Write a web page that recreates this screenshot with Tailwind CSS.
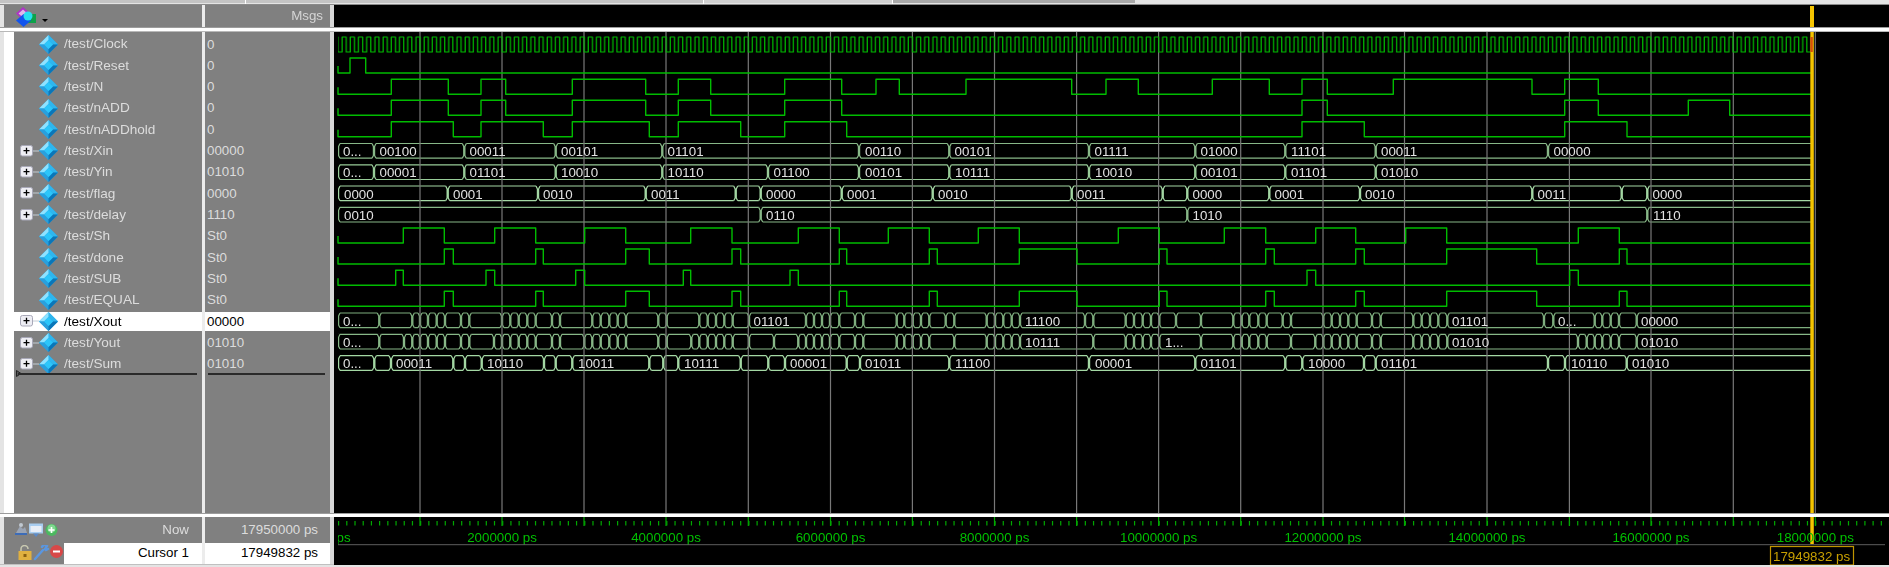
<!DOCTYPE html>
<html>
<head>
<meta charset="utf-8">
<script src="https://cdn.jsdelivr.net/npm/@tailwindcss/browser@4"></script>
</head>
<body class="w-[1889px] h-[567px] overflow-hidden bg-[#e4e4e4] font-['Liberation_Sans'] text-[13.33px] leading-none text-[#dcdcdc] blur-[0.35px]">
<svg class="absolute w-0 h-0">
  <defs>
    <g id="dia">
      <polygon points="9.5,0 19,9.5 9.5,19 0,9.5" fill="#1ea6e6"/>
      <polygon points="9.5,0 19,9.5 14,9.5 9.5,5" fill="#2fb6ee"/>
      <polygon points="9.5,0 9.5,5 5,9.5 0,9.5" fill="#8fe2ff"/>
      <polygon points="0,9.5 5,9.5 9.5,14 9.5,19" fill="#2a9fdc"/>
      <polygon points="19,9.5 14,9.5 9.5,14 9.5,19" fill="#0b76b8"/>
      <polygon points="9.5,5 14,9.5 9.5,14 5,9.5" fill="#2cc6fa"/>
    </g>
    <g id="plus">
      <path d="M13 6H19" stroke="#c4ccd4" stroke-width="1"/>
      <rect x="0.5" y="0.5" width="12" height="10.5" rx="2" fill="#eeeef4" stroke="#a8a8b8"/>
      <path d="M3.5 5.7H9.5M6.5 2.8V8.7" stroke="#000" stroke-width="1.3"/>
    </g>
    <g id="n">
      <rect x="-2" y="-1" width="4" height="17" fill="#000" stroke="none"/>
      <path d="M-2 0L-0.6 3V12L-2 14.7M2 0L0.6 3V12L2 14.7" fill="none"/>
    </g>
    <g id="s">
      <rect x="-2" y="-1" width="4" height="17" fill="#000" stroke="none"/>
      <path d="M2 0L0.6 3V12L2 14.7" fill="none"/>
    </g>
    <pattern id="clk" patternUnits="userSpaceOnUse" x="340.05" y="35" width="8.206" height="19">
      <path d="M0 17H2.05V2H6.15V17H8.206" fill="none" stroke="#00bc00" stroke-width="1.2" stroke-linejoin="round"/>
    </pattern>
  </defs>
</svg>

<!-- top strip -->
<div class="flex h-[5px] border-b border-[#8a8a8a]">
  <div class="w-[245px] h-[3px] bg-[#c4c4c4]"></div>
  <div class="w-[1px] h-[4px] bg-white"></div>
  <div class="w-[457px] h-[3px] bg-[#c4c4c4]"></div>
  <div class="w-[1px] h-[4px] bg-white"></div>
  <div class="w-[188px] h-[3px] bg-[#d0d0d0]"></div>
  <div class="w-[1px] h-[4px] bg-white"></div>
  <div class="w-[242px] h-[3px] bg-[#a8a8a8]"></div>
</div>

<!-- header -->
<div class="flex h-[22px] pl-[4px]">
  <div class="relative w-[198px] bg-[#808080]">
    <svg class="absolute left-[11px] top-[1px] w-[38px] h-[22px]" viewBox="15 6 38 22">
      <polygon points="23,7 30,13.500 23,20 16,13.500" fill="#b030c8"/>
      <polygon points="23,9.500 27.500,13.500 23,17.500 18.500,13.500" fill="#e0b8e8"/>
      <rect x="26" y="14" width="10" height="9" fill="#0ea24a"/>
      <polygon points="23.500,14 31,20.500 23.500,27 16,20.500" fill="#1254ee"/>
      <circle cx="28" cy="16" r="4.500" fill="#27e0f0"/>
      <polygon points="42,19 48,19 45,22" fill="#000"/>
    </svg>
  </div>
  <div class="w-[3px] bg-[#ececec]"></div>
  <div class="w-[125px] bg-[#808080] flex items-center justify-end pr-[7px] text-[#d4d4d4]">Msgs</div>
  <div class="w-[4px] bg-[#d8d8d8]"></div>
  <div class="relative flex-1 bg-black">
    <div class="absolute left-[1476px] top-[1px] bottom-0 w-[3.5px] bg-[#f5c400]"></div>
  </div>
</div>
<div class="h-[5px] border-t border-b border-t-[#9c9c9c] border-b-[#b8b8b8] bg-white"></div>

<!-- list -->
<div class="flex h-[481px] pl-[4px]">
  <div class="relative w-[198px] flex bg-[#808080]">
    <div class="w-[10px] bg-white"></div>
    <div class="flex-1 flex flex-col pt-[1.5px] text-[13.6px]">
      <div class="flex items-center h-[21.33px] pl-[25px]"><svg class="w-[19px] h-[19px]"><use href="#dia"/></svg><span class="ml-[6px]">/test/Clock</span></div>
      <div class="flex items-center h-[21.33px] pl-[25px]"><svg class="w-[19px] h-[19px]"><use href="#dia"/></svg><span class="ml-[6px]">/test/Reset</span></div>
      <div class="flex items-center h-[21.33px] pl-[25px]"><svg class="w-[19px] h-[19px]"><use href="#dia"/></svg><span class="ml-[6px]">/test/N</span></div>
      <div class="flex items-center h-[21.33px] pl-[25px]"><svg class="w-[19px] h-[19px]"><use href="#dia"/></svg><span class="ml-[6px]">/test/nADD</span></div>
      <div class="flex items-center h-[21.33px] pl-[25px]"><svg class="w-[19px] h-[19px]"><use href="#dia"/></svg><span class="ml-[6px]">/test/nADDhold</span></div>
      <div class="flex items-center h-[21.33px] pl-[6px]"><svg class="w-[19px] h-[12px]"><use href="#plus"/></svg><svg class="w-[19px] h-[19px]"><use href="#dia"/></svg><span class="ml-[6px]">/test/Xin</span></div>
      <div class="flex items-center h-[21.33px] pl-[6px]"><svg class="w-[19px] h-[12px]"><use href="#plus"/></svg><svg class="w-[19px] h-[19px]"><use href="#dia"/></svg><span class="ml-[6px]">/test/Yin</span></div>
      <div class="flex items-center h-[21.33px] pl-[6px]"><svg class="w-[19px] h-[12px]"><use href="#plus"/></svg><svg class="w-[19px] h-[19px]"><use href="#dia"/></svg><span class="ml-[6px]">/test/flag</span></div>
      <div class="flex items-center h-[21.33px] pl-[6px]"><svg class="w-[19px] h-[12px]"><use href="#plus"/></svg><svg class="w-[19px] h-[19px]"><use href="#dia"/></svg><span class="ml-[6px]">/test/delay</span></div>
      <div class="flex items-center h-[21.33px] pl-[25px]"><svg class="w-[19px] h-[19px]"><use href="#dia"/></svg><span class="ml-[6px]">/test/Sh</span></div>
      <div class="flex items-center h-[21.33px] pl-[25px]"><svg class="w-[19px] h-[19px]"><use href="#dia"/></svg><span class="ml-[6px]">/test/done</span></div>
      <div class="flex items-center h-[21.33px] pl-[25px]"><svg class="w-[19px] h-[19px]"><use href="#dia"/></svg><span class="ml-[6px]">/test/SUB</span></div>
      <div class="flex items-center h-[21.33px] pl-[25px]"><svg class="w-[19px] h-[19px]"><use href="#dia"/></svg><span class="ml-[6px]">/test/EQUAL</span></div>
      <div class="flex items-center h-[19.33px] my-[1px] pl-[6px] bg-white text-black"><svg class="w-[19px] h-[12px]"><use href="#plus"/></svg><svg class="w-[19px] h-[19px]"><use href="#dia"/></svg><span class="ml-[6px]">/test/Xout</span></div>
      <div class="flex items-center h-[21.33px] pl-[6px]"><svg class="w-[19px] h-[12px]"><use href="#plus"/></svg><svg class="w-[19px] h-[19px]"><use href="#dia"/></svg><span class="ml-[6px]">/test/Yout</span></div>
      <div class="flex items-center h-[21.33px] pl-[6px]"><svg class="w-[19px] h-[12px]"><use href="#plus"/></svg><svg class="w-[19px] h-[19px]"><use href="#dia"/></svg><span class="ml-[6px]">/test/Sum</span></div>
    </div>
    <svg class="absolute left-[12px] top-[338px] w-[8px] h-[8px]"><path d="M0.500 0.500L5 3.500L0.500 6.500Z" fill="#555" stroke="#222"/></svg>
    <div class="absolute left-[14px] top-[341px] w-[179px] h-[2px] bg-[#2a2a2a]"></div>
  </div>
  <div class="w-[3px] bg-[#ececec]"></div>
  <div class="relative w-[125px] flex flex-col pt-[1.5px] pl-[2px] bg-[#808080]">
    <div class="flex items-center h-[21.33px]">0</div>
    <div class="flex items-center h-[21.33px]">0</div>
    <div class="flex items-center h-[21.33px]">0</div>
    <div class="flex items-center h-[21.33px]">0</div>
    <div class="flex items-center h-[21.33px]">0</div>
    <div class="flex items-center h-[21.33px]">00000</div>
    <div class="flex items-center h-[21.33px]">01010</div>
    <div class="flex items-center h-[21.33px]">0000</div>
    <div class="flex items-center h-[21.33px]">1110</div>
    <div class="flex items-center h-[21.33px]">St0</div>
    <div class="flex items-center h-[21.33px]">St0</div>
    <div class="flex items-center h-[21.33px]">St0</div>
    <div class="flex items-center h-[21.33px]">St0</div>
    <div class="flex items-center h-[19.33px] my-[1px] -ml-[2px] pl-[2px] bg-white text-black">00000</div>
    <div class="flex items-center h-[21.33px]">01010</div>
    <div class="flex items-center h-[21.33px]">01010</div>
    <div class="absolute left-[3px] top-[341px] w-[117px] h-[2px] bg-[#2a2a2a]"></div>
  </div>
  <div class="w-[4px] bg-[#d8d8d8]"></div>
  <svg class="w-[1555px] h-[481px] bg-black" viewBox="334 32 1555 481">
    <!-- bus outlines -->
    <g fill="none" stroke="#88b888" stroke-width="1.2">
      <g transform="translate(0,143.500)"><path d="M338 0H1811M338 14.700H1811"/><use href="#s" x="338"/><use href="#n" x="374"/><use href="#n" x="464.300"/><use href="#n" x="555.700"/><use href="#n" x="662.300"/><use href="#n" x="859"/><use href="#n" x="949.300"/><use href="#n" x="1089"/><use href="#n" x="1195.300"/><use href="#n" x="1285.300"/><use href="#n" x="1375.700"/><use href="#n" x="1548"/></g>
      <g transform="translate(0,164.800)" stroke="#98cc98"><path d="M338 0H1811M338 14.700H1811"/><use href="#s" x="338"/><use href="#n" x="374"/><use href="#n" x="464.300"/><use href="#n" x="555.700"/><use href="#n" x="662.300"/><use href="#n" x="768"/><use href="#n" x="859"/><use href="#n" x="949.300"/><use href="#n" x="1089"/><use href="#n" x="1195.300"/><use href="#n" x="1285.300"/><use href="#n" x="1375.700"/></g>
      <g transform="translate(0,186)" stroke="#a4d8a4"><path d="M338 0H1811M338 14.700H1811"/><use href="#s" x="338"/><use href="#n" x="447.700"/><use href="#n" x="538"/><use href="#n" x="645.700"/><use href="#n" x="735.700"/><use href="#n" x="760.700"/><use href="#n" x="841.700"/><use href="#n" x="932.700"/><use href="#n" x="1071.700"/><use href="#n" x="1162.700"/><use href="#n" x="1187.300"/><use href="#n" x="1269.300"/><use href="#n" x="1360"/><use href="#n" x="1532.300"/><use href="#n" x="1621.700"/><use href="#n" x="1647.300"/></g>
      <g transform="translate(0,207.300)"><path d="M338 0H1811M338 14.700H1811"/><use href="#s" x="338"/><use href="#n" x="760.700"/><use href="#n" x="1187.300"/><use href="#n" x="1647.300"/></g>
      <g transform="translate(0,313)" stroke="#7eae7e"><path d="M338 0H1811M338 14.700H1811"/><use href="#s" x="338"/><use href="#n" x="379.300"/><use href="#n" x="412.300"/><use href="#n" x="420"/><use href="#n" x="428"/><use href="#n" x="436.700"/><use href="#n" x="445"/><use href="#n" x="461"/><use href="#n" x="469.300"/><use href="#n" x="502"/><use href="#n" x="510.300"/><use href="#n" x="518.700"/><use href="#n" x="527.300"/><use href="#n" x="535.700"/><use href="#n" x="552"/><use href="#n" x="560"/><use href="#n" x="592.300"/><use href="#n" x="600.700"/><use href="#n" x="609.300"/><use href="#n" x="617.700"/><use href="#n" x="626"/><use href="#n" x="658.300"/><use href="#n" x="666.700"/><use href="#n" x="699.300"/><use href="#n" x="707.700"/><use href="#n" x="716"/><use href="#n" x="724.300"/><use href="#n" x="732.700"/><use href="#n" x="749"/><use href="#n" x="806"/><use href="#n" x="814"/><use href="#n" x="822"/><use href="#n" x="830"/><use href="#n" x="839.300"/><use href="#n" x="855"/><use href="#n" x="863.300"/><use href="#n" x="896.700"/><use href="#n" x="904.300"/><use href="#n" x="912.700"/><use href="#n" x="921"/><use href="#n" x="929.300"/><use href="#n" x="945.700"/><use href="#n" x="954.300"/><use href="#n" x="986.700"/><use href="#n" x="995"/><use href="#n" x="1003.300"/><use href="#n" x="1011.700"/><use href="#n" x="1020"/><use href="#n" x="1085"/><use href="#n" x="1093.300"/><use href="#n" x="1125.700"/><use href="#n" x="1134"/><use href="#n" x="1142.700"/><use href="#n" x="1151"/><use href="#n" x="1159.300"/><use href="#n" x="1176"/><use href="#n" x="1201"/><use href="#n" x="1233.300"/><use href="#n" x="1241.700"/><use href="#n" x="1249.300"/><use href="#n" x="1258.300"/><use href="#n" x="1266.700"/><use href="#n" x="1282.700"/><use href="#n" x="1291"/><use href="#n" x="1323.300"/><use href="#n" x="1331.700"/><use href="#n" x="1340"/><use href="#n" x="1348.300"/><use href="#n" x="1356.700"/><use href="#n" x="1372"/><use href="#n" x="1380.700"/><use href="#n" x="1413.300"/><use href="#n" x="1421.700"/><use href="#n" x="1430"/><use href="#n" x="1438.300"/><use href="#n" x="1447.300"/><use href="#n" x="1544"/><use href="#n" x="1553.300"/><use href="#n" x="1594.700"/><use href="#n" x="1602.300"/><use href="#n" x="1610.700"/><use href="#n" x="1619"/><use href="#n" x="1636.700"/></g>
      <g transform="translate(0,334.300)"><path d="M338 0H1811M338 14.700H1811"/><use href="#s" x="338"/><use href="#n" x="379.300"/><use href="#n" x="404"/><use href="#n" x="412.300"/><use href="#n" x="420"/><use href="#n" x="428"/><use href="#n" x="436.700"/><use href="#n" x="445"/><use href="#n" x="461"/><use href="#n" x="469.300"/><use href="#n" x="494"/><use href="#n" x="502"/><use href="#n" x="510.300"/><use href="#n" x="518.700"/><use href="#n" x="527.300"/><use href="#n" x="535.700"/><use href="#n" x="552"/><use href="#n" x="560"/><use href="#n" x="584.300"/><use href="#n" x="592.300"/><use href="#n" x="600.700"/><use href="#n" x="609.300"/><use href="#n" x="617.700"/><use href="#n" x="626"/><use href="#n" x="658.300"/><use href="#n" x="666.700"/><use href="#n" x="691.300"/><use href="#n" x="699.300"/><use href="#n" x="707.700"/><use href="#n" x="716"/><use href="#n" x="724.300"/><use href="#n" x="732.700"/><use href="#n" x="749"/><use href="#n" x="774"/><use href="#n" x="798.300"/><use href="#n" x="806"/><use href="#n" x="814"/><use href="#n" x="822"/><use href="#n" x="830"/><use href="#n" x="839.300"/><use href="#n" x="855"/><use href="#n" x="863.300"/><use href="#n" x="896.700"/><use href="#n" x="904.300"/><use href="#n" x="912.700"/><use href="#n" x="921"/><use href="#n" x="929.300"/><use href="#n" x="954.300"/><use href="#n" x="986.700"/><use href="#n" x="995"/><use href="#n" x="1003.300"/><use href="#n" x="1011.700"/><use href="#n" x="1020"/><use href="#n" x="1093.300"/><use href="#n" x="1125.700"/><use href="#n" x="1134"/><use href="#n" x="1142.700"/><use href="#n" x="1151"/><use href="#n" x="1159.300"/><use href="#n" x="1201"/><use href="#n" x="1233.300"/><use href="#n" x="1241.700"/><use href="#n" x="1249.300"/><use href="#n" x="1258.300"/><use href="#n" x="1266.700"/><use href="#n" x="1291"/><use href="#n" x="1315.300"/><use href="#n" x="1323.300"/><use href="#n" x="1331.700"/><use href="#n" x="1340"/><use href="#n" x="1348.300"/><use href="#n" x="1356.700"/><use href="#n" x="1372"/><use href="#n" x="1380.700"/><use href="#n" x="1413.300"/><use href="#n" x="1421.700"/><use href="#n" x="1430"/><use href="#n" x="1438.300"/><use href="#n" x="1447.300"/><use href="#n" x="1578"/><use href="#n" x="1586.700"/><use href="#n" x="1594.700"/><use href="#n" x="1602.300"/><use href="#n" x="1610.700"/><use href="#n" x="1619"/><use href="#n" x="1636.700"/></g>
      <g transform="translate(0,355.700)" stroke="#a4d8a4"><path d="M338 0H1811M338 14.700H1811"/><use href="#s" x="338"/><use href="#n" x="374.300"/><use href="#n" x="391"/><use href="#n" x="453.300"/><use href="#n" x="465"/><use href="#n" x="481.700"/><use href="#n" x="544"/><use href="#n" x="555.700"/><use href="#n" x="572.300"/><use href="#n" x="649.300"/><use href="#n" x="663.300"/><use href="#n" x="678.300"/><use href="#n" x="740.700"/><use href="#n" x="768.300"/><use href="#n" x="785"/><use href="#n" x="846.700"/><use href="#n" x="860"/><use href="#n" x="949.300"/><use href="#n" x="1089"/><use href="#n" x="1195.300"/><use href="#n" x="1285.300"/><use href="#n" x="1302.300"/><use href="#n" x="1364"/><use href="#n" x="1375.700"/><use href="#n" x="1548"/><use href="#n" x="1565"/><use href="#n" x="1626.700"/></g>
    </g>
    <!-- grid -->
    <path d="M420 32V513M502 32V513M584 32V513M666 32V513M748.300 32V513M830.500 32V513M912.400 32V513M994.500 32V513M1076.600 32V513M1158.600 32V513M1240.700 32V513M1323 32V513M1404.500 32V513M1487 32V513M1569.400 32V513M1651 32V513M1733.300 32V513M1815.300 32V513" stroke="#787878" stroke-width="1.2" fill="none"/>
    <!-- scalar signals -->
    <rect x="338" y="35" width="1473" height="19" fill="url(#clk)"/>
    <g fill="none" stroke="#00bc00" stroke-width="1.4" stroke-linejoin="round">
      <path transform="translate(0,58)" d="M338 8V15H350V0H365.700V15H1811"/>
      <path transform="translate(0,79.300)" d="M338 8V15H391.300V0H448.300V15H481V0H505.700V15H572.300V0H645.700V15H678.300V0H710.700V15H784.700V0H841.700V15H876V0H899.300V15H966V0H1071.700V15H1106V0H1138.300V15H1212.300V0H1269.300V15H1302V0H1327.300V15H1393.300V0H1532V15H1564.700V0H1598.300V15H1811"/>
      <path transform="translate(0,100.300)" d="M338 8V15H391.300V0H448.300V15H481V0H505.700V15H572.300V0H645.700V15H678.300V0H710.700V15H784.700V0H841.700V15H1302V0H1327.300V15H1564.700V0H1598.300V15H1688.300V0H1729.700V15H1811"/>
      <path transform="translate(0,121.700)" d="M338 8V15H391.300V0H453.300V15H481V0H543.300V15H572.300V0H649.300V15H678.300V0H740.700V15H784.700V0H846.700V15H1302V0H1364.300V15H1564.700V0H1627V15H1811"/>
      <path transform="translate(0,228)" d="M338 8V15H403.300V0H444.300V15H494.700V0H535.700V15H584.700V0H625.700V15H690.700V0H732V15H798.300V0H839.300V15H888.300V0H929.300V15H978.300V0H1019.300V15H1118.300V0H1159.300V15H1224.300V0H1265.700V15H1315.700V0H1355.700V15H1405.700V0H1446.700V15H1578.300V0H1619.300V15H1811"/>
      <path transform="translate(0,249)" d="M338 8V15H444.300V0H453.300V15H535.700V0H543.300V15H625.700V0H649.300V15H732V0H740.700V15H839.300V0H846.700V15H929.300V0H937.300V15H1019.300V0H1077V15H1159.300V0H1167V15H1265.700V0H1274.300V15H1355.700V0H1364.300V15H1446.700V0H1536.700V15H1619.300V0H1627V15H1811"/>
      <path transform="translate(0,270.300)" d="M338 8V15H395.700V0H403.300V15H486V0H494.700V15H575.700V0H584.700V15H683.300V0H690.700V15H790V0H798.300V15H1307V0H1315.700V15H1569.700V0H1578.300V15H1811"/>
      <path transform="translate(0,291.300)" d="M338 8V15H444.300V0H453.300V15H535.700V0H543.300V15H625.700V0H649.300V15H732V0H740.700V15H839.300V0H846.700V15H929.300V0H937.300V15H1019.300V0H1077V15H1159.300V0H1167V15H1265.700V0H1274.300V15H1355.700V0H1364.300V15H1446.700V0H1536.700V15H1619.300V0H1627V15H1811"/>
    </g>
    <!-- bus values -->
    <g fill="#e2e2e2" font-size="13.33">
      <text y="156"><tspan x="343">0...</tspan><tspan x="379.500">00100</tspan><tspan x="469.500">00011</tspan><tspan x="561">00101</tspan><tspan x="667.500">01101</tspan><tspan x="865">00110</tspan><tspan x="954.500">00101</tspan><tspan x="1094.500">01111</tspan><tspan x="1200.500">01000</tspan><tspan x="1291">11101</tspan><tspan x="1381">00011</tspan><tspan x="1553.500">00000</tspan></text>
      <text y="177.300"><tspan x="343">0...</tspan><tspan x="379.500">00001</tspan><tspan x="469.500">01101</tspan><tspan x="561">10010</tspan><tspan x="667.500">10110</tspan><tspan x="773.500">01100</tspan><tspan x="865">00101</tspan><tspan x="955">10111</tspan><tspan x="1095">10010</tspan><tspan x="1200.500">00101</tspan><tspan x="1291">01101</tspan><tspan x="1381">01010</tspan></text>
      <text y="198.500"><tspan x="344">0000</tspan><tspan x="453">0001</tspan><tspan x="543">0010</tspan><tspan x="651">0011</tspan><tspan x="766">0000</tspan><tspan x="847">0001</tspan><tspan x="938">0010</tspan><tspan x="1077">0011</tspan><tspan x="1192.500">0000</tspan><tspan x="1274.500">0001</tspan><tspan x="1365">0010</tspan><tspan x="1537.500">0011</tspan><tspan x="1652.500">0000</tspan></text>
      <text y="220"><tspan x="344">0010</tspan><tspan x="766">0110</tspan><tspan x="1192.500">1010</tspan><tspan x="1653">1110</tspan></text>
      <text y="325.500"><tspan x="343">0...</tspan><tspan x="753.500">01101</tspan><tspan x="1025">11100</tspan><tspan x="1452">01101</tspan><tspan x="1558">0...</tspan><tspan x="1641">00000</tspan></text>
      <text y="346.800"><tspan x="343">0...</tspan><tspan x="1025">10111</tspan><tspan x="1165">1...</tspan><tspan x="1452">01010</tspan><tspan x="1641">01010</tspan></text>
      <text y="368.200"><tspan x="343">0...</tspan><tspan x="396">00011</tspan><tspan x="487">10110</tspan><tspan x="578">10011</tspan><tspan x="684">10111</tspan><tspan x="790">00001</tspan><tspan x="865">01011</tspan><tspan x="955">11100</tspan><tspan x="1095">00001</tspan><tspan x="1200.500">01101</tspan><tspan x="1308">10000</tspan><tspan x="1381">01101</tspan><tspan x="1571">10110</tspan><tspan x="1632">01010</tspan></text>
    </g>
    <!-- cursor -->
    <rect x="1810.300" y="32" width="3.500" height="481" fill="#f5c400"/>
    <rect x="1810.300" y="37" width="2.500" height="15" fill="#d8500a"/>
  </svg>
</div>

<div class="h-[3.500px] border-t border-[#9c9c9c] bg-white"></div>

<!-- bottom -->
<div class="flex h-[48px] pl-[4px] border-b border-[#c0c0c0]">
  <div class="w-[198px] flex flex-col bg-[#808080]">
    <div class="flex items-center h-[27px] pl-[11px]">
      <svg class="w-[43px] h-[16px]" viewBox="15 522 43 16">
        <path d="M16 533L20 526L23 529L25 527L27 533Z" fill="#9aa4b4"/><path d="M15 533H27V535H15Z" fill="#3c6cb8"/><circle cx="21" cy="525" r="2" fill="#c0c8d0"/>
        <rect x="29" y="523.500" width="14" height="10" fill="#a8cdf0"/><rect x="30.500" y="526" width="11" height="6" fill="#e8eef6"/><path d="M33 533.500H39L36 537Z" fill="#5a8ac8"/>
        <circle cx="51.500" cy="530" r="6" fill="#4cb860"/><circle cx="51.500" cy="528.500" r="4" fill="#80d890"/><path d="M48.500 530H54.500M51.500 527V533" stroke="#fff" stroke-width="1.600"/>
      </svg>
      <span class="ml-auto mr-[13px]">Now</span>
    </div>
    <div class="flex h-[21.500px]">
      <div class="w-[60px] flex items-center pl-[14px]">
        <svg class="w-[46px] h-[16px]" viewBox="18 547 46 16">
          <path d="M21 553V551A3.500 3.500 0 0 1 28 551" fill="none" stroke="#c8c8b0" stroke-width="1.500"/><rect x="18.500" y="553" width="13" height="9" fill="#e0b040"/><rect x="23.500" y="556" width="3" height="3" fill="#8a6010"/>
          <path d="M35 561L43 552M42 549A3 3 0 0 1 47 548L45 551L46 552L48 551" fill="none" stroke="#5a96e0" stroke-width="2.400" stroke-linecap="round"/>
          <circle cx="56.500" cy="553.500" r="6.500" fill="#d84848"/><path d="M53 553.500H60" stroke="#fff" stroke-width="2"/>
        </svg>
      </div>
      <div class="flex-1 flex items-center justify-end pr-[13px] bg-white text-black">Cursor 1</div>
    </div>
  </div>
  <div class="w-[3px] bg-[#ececec]"></div>
  <div class="w-[125px] flex flex-col bg-[#808080]">
    <div class="flex items-center justify-end h-[27px] pr-[12px]">17950000 ps</div>
    <div class="flex items-center justify-end h-[21.500px] pr-[12px] bg-white text-black">17949832 ps</div>
  </div>
  <div class="w-[4px] bg-[#d8d8d8]"></div>
  <svg class="w-[1555px] h-[48px] bg-black" viewBox="334 516 1555 48">
    <path d="M338 522.300H1889" stroke="#00a800" stroke-width="4.500" stroke-dasharray="1.200 7.006" fill="none"/>
    <path d="M420 516V525M502 516V525M584 516V525M666 516V525M748.300 516V525M830.500 516V525M912.400 516V525M994.500 516V525M1076.600 516V525M1158.600 516V525M1240.700 516V525M1323 516V525M1404.500 516V525M1487 516V525M1569.400 516V525M1651 516V525M1733.300 516V525M1815.300 516V525" stroke="#00a800" stroke-width="1.200" fill="none"/>
    <rect x="1810.300" y="516" width="3.500" height="27" fill="#f5c400"/>
    <g fill="#00c000" font-size="13.33" text-anchor="middle">
      <text x="338" y="541">0 ps</text><text x="502" y="541">2000000 ps</text><text x="666" y="541">4000000 ps</text><text x="830.500" y="541">6000000 ps</text><text x="994.500" y="541">8000000 ps</text><text x="1158.600" y="541">10000000 ps</text><text x="1323" y="541">12000000 ps</text><text x="1487" y="541">14000000 ps</text><text x="1651" y="541">16000000 ps</text><text x="1815.300" y="541">18000000 ps</text>
    </g>
    <rect x="334" y="516" width="4" height="30" fill="#000"/>
    <path d="M338 543.700H1885" stroke="#5e5e5e" stroke-width="1"/>
    <rect x="1770.500" y="545.500" width="83" height="18.500" fill="#000" stroke="#c09400" stroke-width="1.200"/>
    <text x="1773" y="559.500" fill="#c8a000" font-size="13.33">17949832 ps</text>
  </svg>
</div>
</body>
</html>
